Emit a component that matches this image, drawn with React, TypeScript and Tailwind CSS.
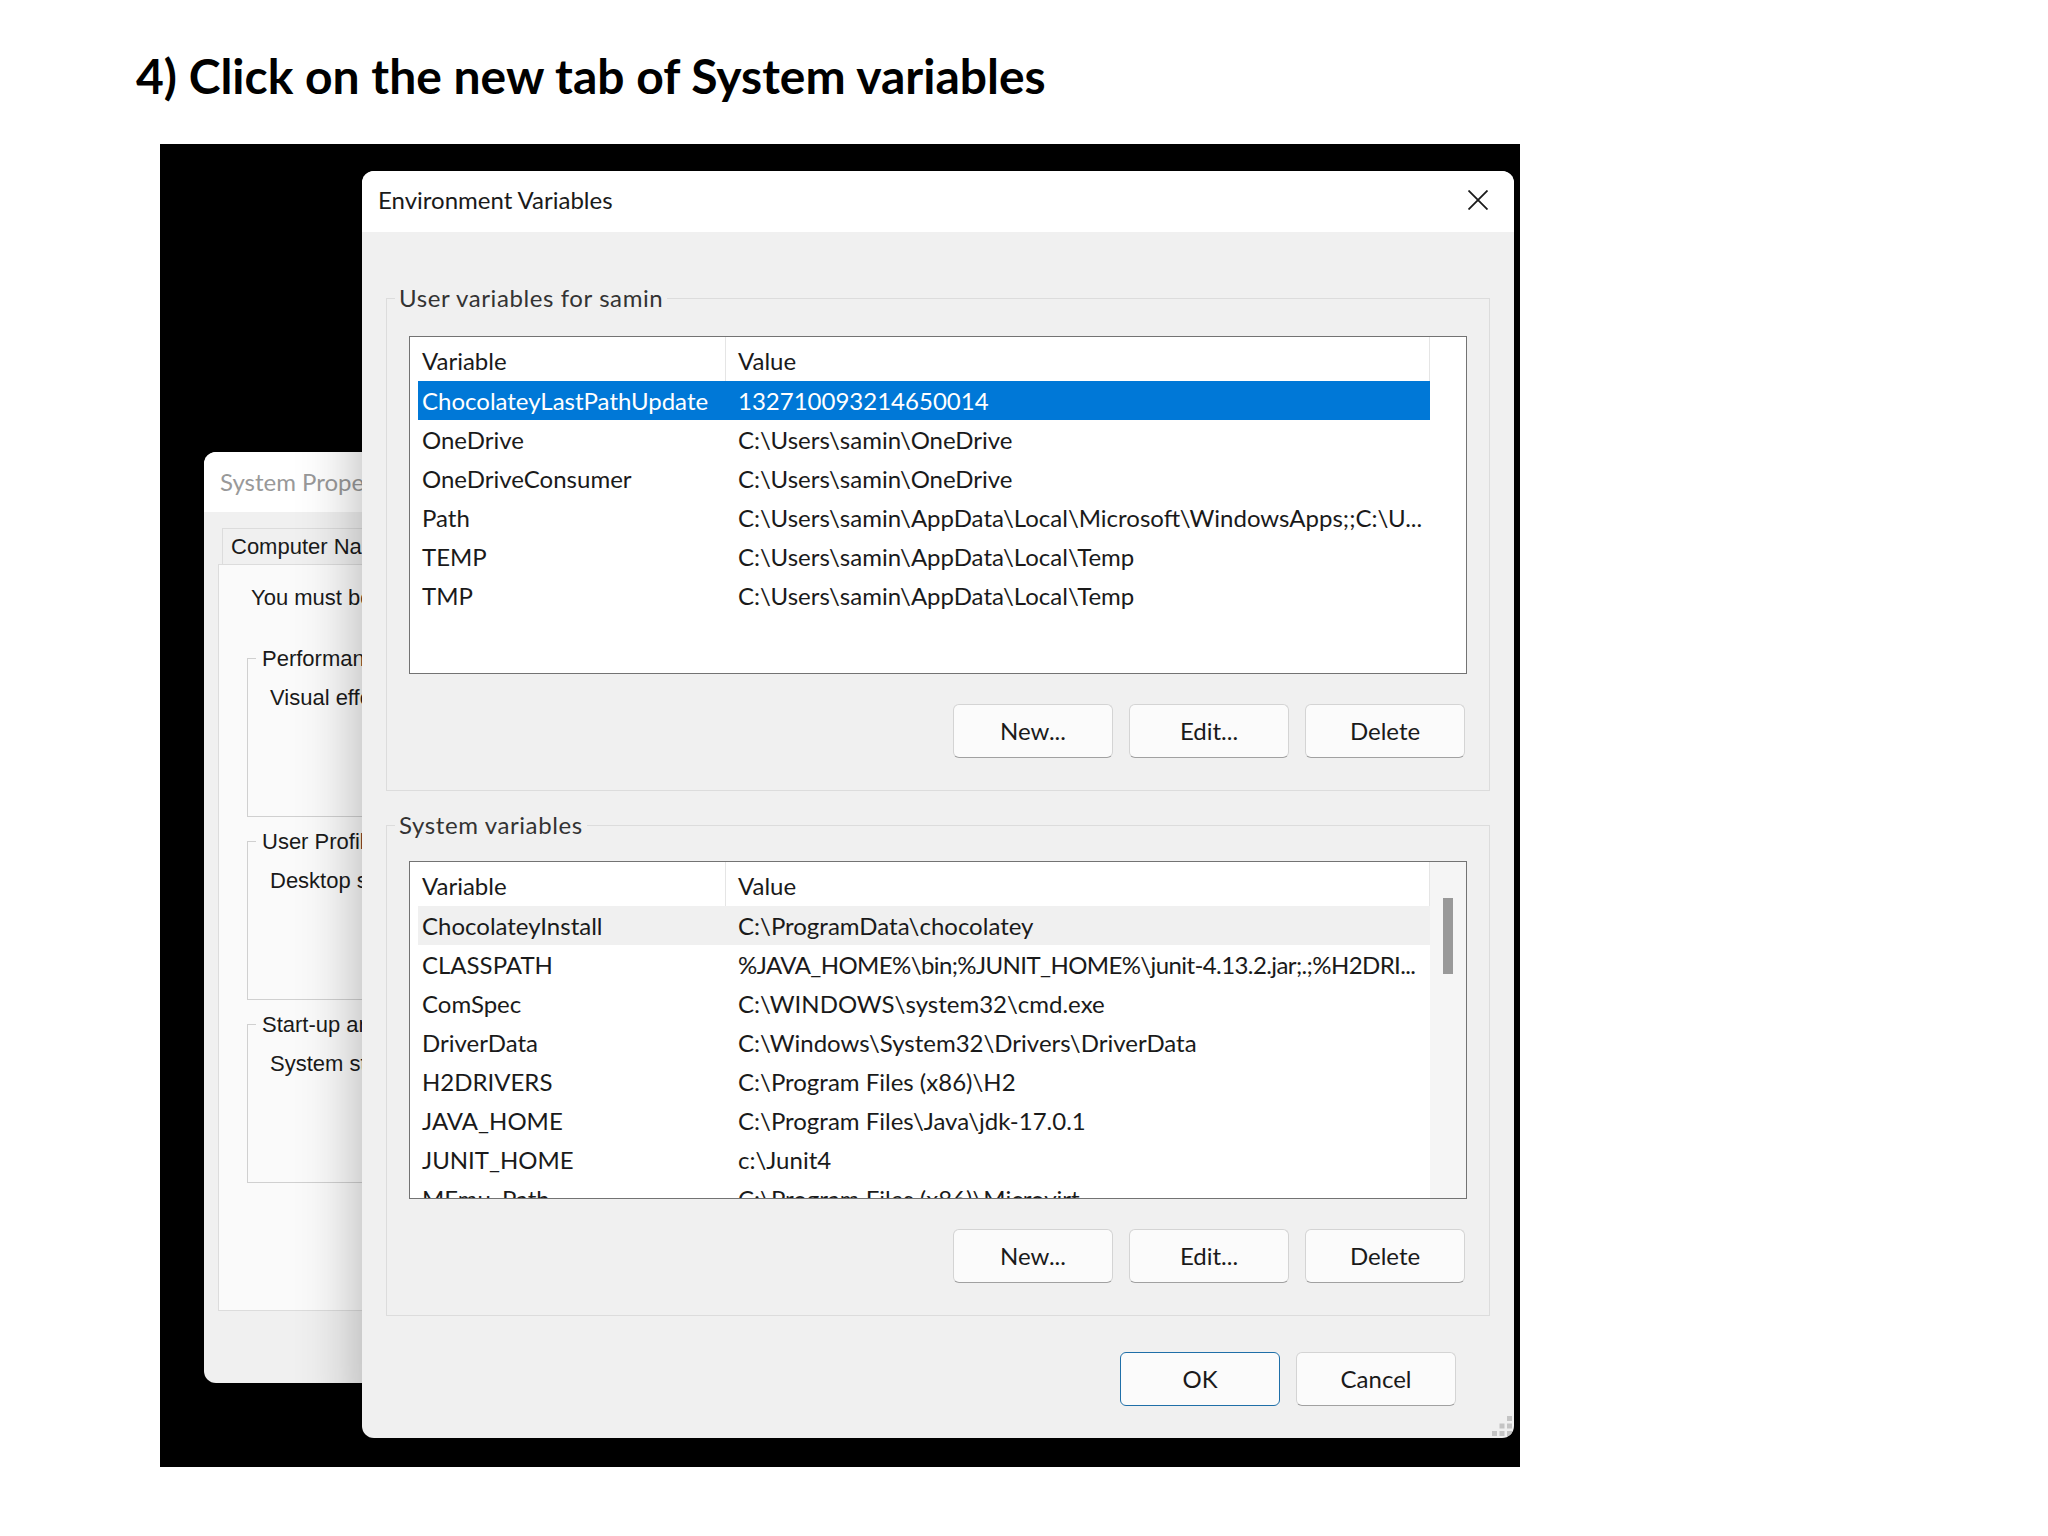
const userRows = [
  ["ChocolateyLastPathUpdate", "132710093214650014"],
  ["OneDrive", "C:\\Users\\samin\\OneDrive"],
  ["OneDriveConsumer", "C:\\Users\\samin\\OneDrive"],
  ["Path", "C:\\Users\\samin\\AppData\\Local\\Microsoft\\WindowsApps;;C:\\U..."],
  ["TEMP", "C:\\Users\\samin\\AppData\\Local\\Temp"],
  ["TMP", "C:\\Users\\samin\\AppData\\Local\\Temp"],
];

const systemRows = [
  ["ChocolateyInstall", "C:\\ProgramData\\chocolatey"],
  ["CLASSPATH", "%JAVA_HOME%\\bin;%JUNIT_HOME%\\junit-4.13.2.jar;.;%H2DRI...", "tracking-tight"],
  ["ComSpec", "C:\\WINDOWS\\system32\\cmd.exe"],
  ["DriverData", "C:\\Windows\\System32\\Drivers\\DriverData"],
  ["H2DRIVERS", "C:\\Program Files (x86)\\H2"],
  ["JAVA_HOME", "C:\\Program Files\\Java\\jdk-17.0.1"],
  ["JUNIT_HOME", "c:\\Junit4"],
  ["MEmu_Path", "C:\\Program Files (x86)\\Microvirt"],
];

function VariableList({ rows, selected, hovered, scroll }: { rows: string[][]; selected?: boolean; hovered?: boolean; scroll?: boolean }) {
  return (
    <div className="flex h-84.5 overflow-hidden border border-neutral-500 bg-white">
      <div className="min-w-0 flex-1 pl-2">
        <div className="flex h-11">
          <div className="flex w-[308px] items-center border-r border-neutral-200 pt-1 pl-1">Variable</div>
          <div className="flex flex-1 items-center border-r border-neutral-200 pt-1 pl-3">Value</div>
        </div>
        {rows.map((r, i) => (
          <div
            key={r[0]}
            className={
              "flex h-[39px] items-center whitespace-nowrap " +
              (i === 0 && selected ? "bg-[#0078d7] text-white " : "") +
              (i === 0 && hovered ? "bg-[#f0f0f0] " : "")
            }
          >
            <div className="w-80 pl-1">{r[0]}</div>
            <div className={r[2] ?? ""}>{r[1]}</div>
          </div>
        ))}
      </div>
      <div className={"flex w-9 shrink-0 flex-col items-center pt-9 " + (scroll ? "bg-[#f5f5f5]" : "")}>
        {scroll && <div className="h-19 w-2.5 bg-[#999999]" />}
      </div>
    </div>
  );
}

function Btn({ label, primary }: { label: string; primary?: boolean }) {
  return (
    <button
      className={
        "flex h-13.5 w-40 items-center justify-center rounded-md border bg-[#fbfbfb] " +
        (primary ? "border-[#1f6fa8]" : "border-neutral-300 border-b-neutral-400")
      }
    >
      {label}
    </button>
  );
}

function ButtonRow() {
  return (
    <div className="mt-7.5 flex justify-end gap-4 pr-0.5">
      <Btn label="New..." />
      <Btn label="Edit..." />
      <Btn label="Delete" />
    </div>
  );
}

function Group({ title, children, className, innerClassName }: { title: string; children: React.ReactNode; className?: string; innerClassName: string }) {
  return (
    <fieldset className={"min-w-0 border border-[#dcdcdc] pb-8 " + (className ?? "")}>
      <legend className="ml-2 px-1 leading-8 tracking-wide text-[#333333]">{title}</legend>
      <div className={"px-5.5 " + innerClassName}>{children}</div>
    </fieldset>
  );
}

function SysGroup({ title, line }: { title: string; line: string }) {
  return (
    <fieldset className="mb-2 ml-7 h-[175px] border border-[#d0d0d0]">
      <legend className="ml-2 px-1.5">{title}</legend>
      <div className="mt-1.5 pl-5.5">{line}</div>
    </fieldset>
  );
}

function SystemProperties() {
  return (
    <div className="absolute top-77 left-11 flex h-[931px] w-[500px] flex-col overflow-hidden rounded-xl bg-[#f0f0f0]">
      <div className="flex h-15 items-center bg-white pl-4 font-[Lato,sans-serif] text-2xl text-[#999999]">
        System Prope
      </div>
      <div className="flex flex-1 flex-col pt-4 pb-18 pl-3.5 font-['Liberation_Sans',sans-serif] text-[22px] text-[#1a1a1a]">
        <div className="ml-1 flex h-9 w-48 items-center border border-b-0 border-[#dcdcdc] pl-2 whitespace-nowrap">Computer Nam</div>
        <div className="flex-1 border border-[#dcdcdc] bg-[#fafafa] pt-4 whitespace-nowrap">
          <div className="mb-7 pl-8">You must be</div>
          <SysGroup title="Performan" line="Visual effe" />
          <SysGroup title="User Profil" line="Desktop s" />
          <SysGroup title="Start-up ar" line="System st" />
        </div>
      </div>
    </div>
  );
}

function Gripper() {
  const cells = [[15, 0], [7.5, 7.5], [15, 7.5], [0, 15], [7.5, 15], [15, 15]];
  return (
    <svg className="absolute right-0.5 bottom-0.5 h-5 w-5" viewBox="0 0 20 20">
      {cells.map(([x, y]) => (
        <rect key={`${x}-${y}`} x={x} y={y} width="5" height="5" fill="#c4c4c4" />
      ))}
    </svg>
  );
}

function EnvironmentDialog() {
  return (
    <div className="absolute top-[27px] left-[202px] flex h-[1267px] w-[1152px] flex-col overflow-hidden rounded-xl bg-[#f0f0f0] font-[Lato,sans-serif] text-2xl text-[#1a1a1a] shadow-[0_0_64px_rgba(0,0,0,0.3)]">
      <div className="flex h-[61px] items-center justify-between bg-white pr-6.5 pb-1 pl-4">
        <span>Environment Variables</span>
        <svg className="h-5 w-5" viewBox="0 0 20 20" fill="none" stroke="#1a1a1a" strokeWidth="1.8">
          <path d="M0.5 0.5 L19.5 19.5 M19.5 0.5 L0.5 19.5" />
        </svg>
      </div>
      <div className="flex flex-1 flex-col px-6 pt-12.5">
        <Group title="User variables for samin" innerClassName="mt-5.5">
          <VariableList rows={userRows} selected />
          <ButtonRow />
        </Group>
        <Group title="System variables" className="mt-4.5" innerClassName="mt-5">
          <VariableList rows={systemRows} hovered scroll />
          <ButtonRow />
        </Group>
        <div className="mt-9 mr-8.5 flex justify-end gap-4">
          <Btn label="OK" primary />
          <Btn label="Cancel" />
        </div>
      </div>
      <Gripper />
    </div>
  );
}

export default function App() {
  return (
    <div className="min-h-screen bg-white">
      <div className="flex h-36 items-start pt-13 pl-34">
        <h1 className="font-[Lato,sans-serif] text-5xl leading-none font-bold text-black">
          4) Click on the new tab of System variables
        </h1>
      </div>
      <div className="relative ml-40 h-[1323px] w-[1360px] overflow-hidden bg-black">
        <SystemProperties />
        <EnvironmentDialog />
      </div>
    </div>
  );
}
